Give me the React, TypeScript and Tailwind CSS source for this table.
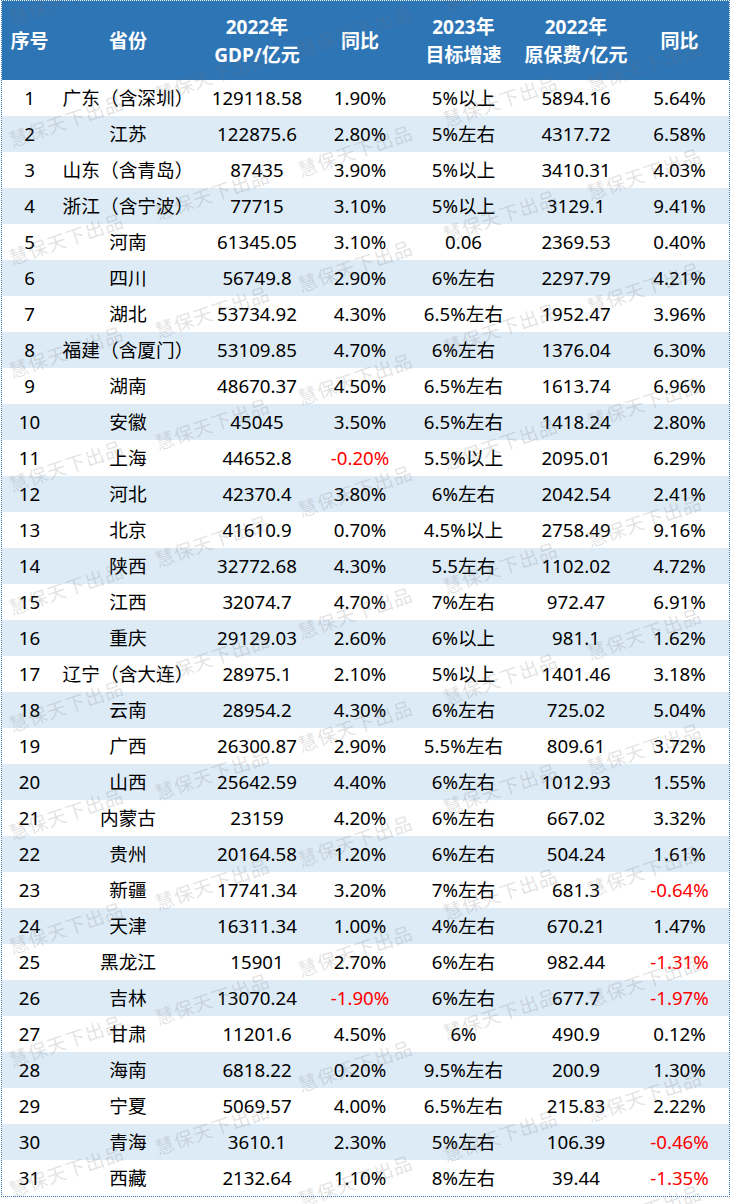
import React from "react";

type Row = [string, string, string, string, string, string, string];

const ROWS: Row[] = [
  ["1", "广东（含深圳）", "129118.58", "1.90%", "5%以上", "5894.16", "5.64%"],
  ["2", "江苏", "122875.6", "2.80%", "5%左右", "4317.72", "6.58%"],
  ["3", "山东（含青岛）", "87435", "3.90%", "5%以上", "3410.31", "4.03%"],
  ["4", "浙江（含宁波）", "77715", "3.10%", "5%以上", "3129.1", "9.41%"],
  ["5", "河南", "61345.05", "3.10%", "0.06", "2369.53", "0.40%"],
  ["6", "四川", "56749.8", "2.90%", "6%左右", "2297.79", "4.21%"],
  ["7", "湖北", "53734.92", "4.30%", "6.5%左右", "1952.47", "3.96%"],
  ["8", "福建（含厦门）", "53109.85", "4.70%", "6%左右", "1376.04", "6.30%"],
  ["9", "湖南", "48670.37", "4.50%", "6.5%左右", "1613.74", "6.96%"],
  ["10", "安徽", "45045", "3.50%", "6.5%左右", "1418.24", "2.80%"],
  ["11", "上海", "44652.8", "-0.20%", "5.5%以上", "2095.01", "6.29%"],
  ["12", "河北", "42370.4", "3.80%", "6%左右", "2042.54", "2.41%"],
  ["13", "北京", "41610.9", "0.70%", "4.5%以上", "2758.49", "9.16%"],
  ["14", "陕西", "32772.68", "4.30%", "5.5左右", "1102.02", "4.72%"],
  ["15", "江西", "32074.7", "4.70%", "7%左右", "972.47", "6.91%"],
  ["16", "重庆", "29129.03", "2.60%", "6%以上", "981.1", "1.62%"],
  ["17", "辽宁（含大连）", "28975.1", "2.10%", "5%以上", "1401.46", "3.18%"],
  ["18", "云南", "28954.2", "4.30%", "6%左右", "725.02", "5.04%"],
  ["19", "广西", "26300.87", "2.90%", "5.5%左右", "809.61", "3.72%"],
  ["20", "山西", "25642.59", "4.40%", "6%左右", "1012.93", "1.55%"],
  ["21", "内蒙古", "23159", "4.20%", "6%左右", "667.02", "3.32%"],
  ["22", "贵州", "20164.58", "1.20%", "6%左右", "504.24", "1.61%"],
  ["23", "新疆", "17741.34", "3.20%", "7%左右", "681.3", "-0.64%"],
  ["24", "天津", "16311.34", "1.00%", "4%左右", "670.21", "1.47%"],
  ["25", "黑龙江", "15901", "2.70%", "6%左右", "982.44", "-1.31%"],
  ["26", "吉林", "13070.24", "-1.90%", "6%左右", "677.7", "-1.97%"],
  ["27", "甘肃", "11201.6", "4.50%", "6%", "490.9", "0.12%"],
  ["28", "海南", "6818.22", "0.20%", "9.5%左右", "200.9", "1.30%"],
  ["29", "宁夏", "5069.57", "4.00%", "6.5%左右", "215.83", "2.22%"],
  ["30", "青海", "3610.1", "2.30%", "5%左右", "106.39", "-0.46%"],
  ["31", "西藏", "2132.64", "1.10%", "8%左右", "39.44", "-1.35%"],
];

// watermark centres, measured per diagonal column
const MARKS: [number, number[]][] = [
  [66, [-2, 120, 238, 351, 465, 588, 705, 813, 927, 1040, 1170]],
  [212, [75, 193, 311, 423, 540, 657, 773, 883, 998, 1128]],
  [355, [30, 150, 265, 378, 490, 612, 725, 840, 950, 1065, 1180]],
  [500, [-15, 100, 215, 328, 443, 567, 678, 788, 893, 1013, 1135]],
  [644, [65, 173, 287, 402, 520, 633, 748, 870, 980, 1095, 1210]],
];

const COLS = "grid grid-cols-[55px_142px_116px_90px_117px_108px_99px]";

function Cell({ text }: { text: string }) {
  const red = text.startsWith("-");
  return (
    <div
      className={`flex items-center justify-center whitespace-nowrap ${red ? "text-[#ff0000]" : "text-black"}`}
    >
      {text}
    </div>
  );
}

export default function App() {
  return (
    <div
      className="relative h-[1204px] w-[732px] overflow-hidden bg-white"
      style={{ fontFamily: '"Noto Sans", "Noto Sans CJK SC", sans-serif' }}
    >
      <div className="ml-[1px] w-[729px] border border-dotted border-[#2e75b6]">
        {/* header */}
        <div
          className={`${COLS} h-[79px] bg-[#2e75b6] text-[19px] font-bold leading-[28px] text-white`}
        >
          <div className="flex items-center justify-center">序号</div>
          <div className="flex items-center justify-center">省份</div>
          <div className="flex flex-col items-center justify-center">
            <span>2022年</span>
            <span>GDP/亿元</span>
          </div>
          <div className="flex items-center justify-center">同比</div>
          <div className="flex flex-col items-center justify-center">
            <span>2023年</span>
            <span>目标增速</span>
          </div>
          <div className="flex flex-col items-center justify-center">
            <span>2022年</span>
            <span>原保费/亿元</span>
          </div>
          <div className="flex items-center justify-center">同比</div>
        </div>

        {/* body */}
        {ROWS.map((row, i) => (
          <div
            key={row[0]}
            className={`${COLS} h-[36px] text-[18.7px] leading-none ${i % 2 === 1 ? "bg-[#ddebf7]" : "bg-white"}`}
          >
            {row.map((v, k) => (
              <Cell key={k} text={v} />
            ))}
          </div>
        ))}
      </div>

      {/* watermark overlay */}
      <div className="pointer-events-none absolute inset-0">
        {MARKS.flatMap(([x, ys]) =>
          ys.map((y) => (
            <span
              key={`${x}-${y}`}
              className="absolute whitespace-nowrap text-[19px] leading-none tracking-[1px] text-[rgba(110,110,110,0.2)]"
              style={{
                left: x,
                top: y,
                transform: "translate(-50%, -50%) rotate(-19deg)",
                fontFamily: '"Noto Sans CJK SC", sans-serif',
              }}
            >
              慧保天下出品
            </span>
          )),
        )}
      </div>
    </div>
  );
}
